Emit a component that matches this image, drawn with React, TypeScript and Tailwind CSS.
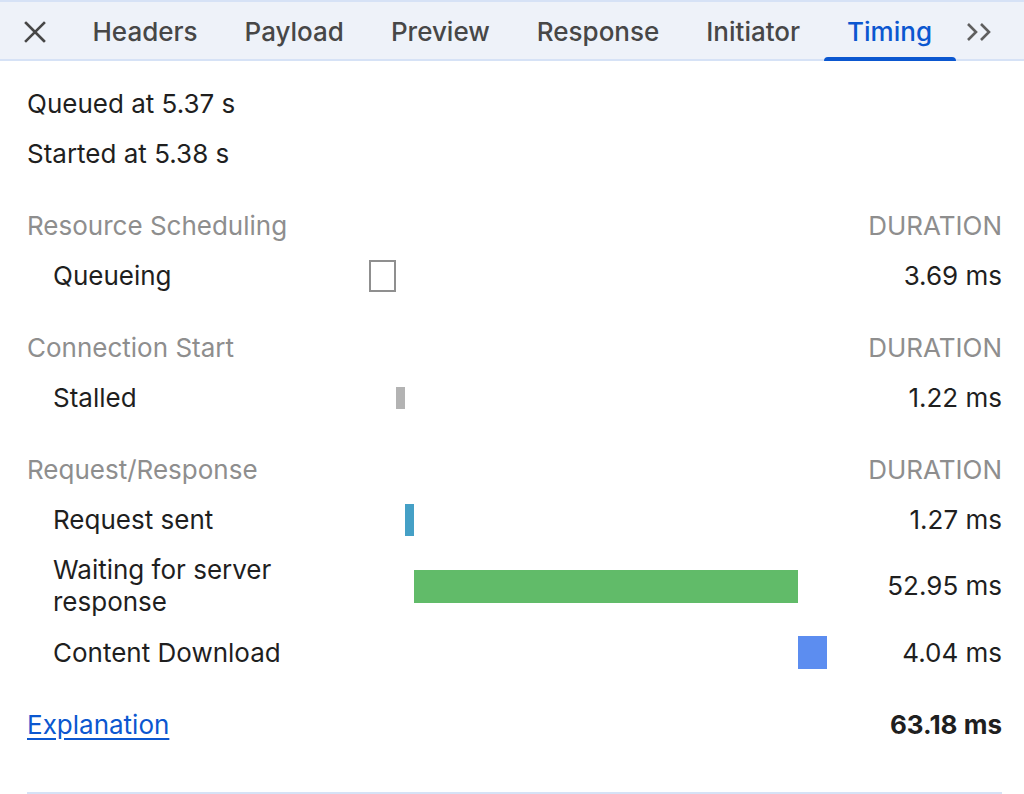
import React from "react";

interface Phase {
  label: string;
  start: number;
  duration: number;
  kind: "queue" | "stalled" | "sent" | "waiting" | "download";
}

interface Section {
  title: string;
  phases: Phase[];
}

const TOTAL = 63.18;
const TRACK_WIDTH = 458;

const sections: Section[] = [
  {
    title: "Resource Scheduling",
    phases: [{ label: "Queueing", start: 0, duration: 3.69, kind: "queue" }],
  },
  {
    title: "Connection Start",
    phases: [{ label: "Stalled", start: 3.69, duration: 1.22, kind: "stalled" }],
  },
  {
    title: "Request/Response",
    phases: [
      { label: "Request sent", start: 4.91, duration: 1.27, kind: "sent" },
      { label: "Waiting for server response", start: 6.18, duration: 52.95, kind: "waiting" },
      { label: "Content Download", start: 59.13, duration: 4.04, kind: "download" },
    ],
  },
];

const tabs = ["Headers", "Payload", "Preview", "Response", "Initiator", "Timing"];

const barClass: Record<Phase["kind"], string> = {
  queue: "h-[32px] border-2 border-[#8f8f8f] bg-white",
  stalled: "h-[22px] bg-[#b3b3b3]",
  sent: "h-[32px] bg-[#45a0c6]",
  waiting: "h-[33px] bg-[#61bb69]",
  download: "h-[33px] bg-[#5c8df0]",
};

const Bar = ({ phase }: { phase: Phase }) => {
  const px = TRACK_WIDTH / TOTAL;
  return (
    <div className="flex items-center h-full">
      <div
        className={barClass[phase.kind]}
        style={{
          marginLeft: Math.round(phase.start * px),
          width: Math.round(phase.duration * px),
        }}
      />
    </div>
  );
};

const TabBar = () => (
  <div className="flex items-stretch h-[61px] bg-[#eef2f9] border-t-2 border-b-2 border-[#d6e2f6] pl-[12px]">
    <button className="w-[57px] flex items-center justify-center pt-[3px] pr-[11px] text-[#474747]">
      <svg width="24" height="24" viewBox="0 0 24 24" fill="none" stroke="currentColor" strokeWidth={2.6} strokeLinecap="square">
        <path d="M3 3l18 18M21 3L3 21" />
      </svg>
    </button>
    {tabs.map((tab) => {
      const active = tab === "Timing";
      return (
        <div
          key={tab}
          className={`relative flex items-center px-[23.5px] pt-[3px] font-medium ${
            active ? "text-[#0b57d0]" : "text-[#474747]"
          }`}
        >
          {tab}
          {active && (
            <div className="absolute left-0 right-0 bottom-[-2px] h-[4px] bg-[#0b57d0] rounded-t-[4px]" />
          )}
        </div>
      );
    })}
    <div className="flex items-center pl-[10px] pt-[3px] text-[#5f5f5f]">
      <svg width="28" height="20" viewBox="0 0 28 20" fill="none" stroke="currentColor" strokeWidth={2.6}>
        <path d="M2 2l8 8-8 8M15 2l8 8-8 8" />
      </svg>
    </div>
  </div>
);

export default function App() {
  return (
    <div
      className="w-[1024px] h-[794px] bg-white text-[#1f1f1f] text-[26px] leading-[32px] overflow-hidden"
      style={{ fontFamily: "Inter, 'Noto Sans', sans-serif" }}
    >
      <TabBar />

      <div className="pl-[27px] pr-[22px] pt-[18px]">
        <div className="py-[9px]">Queued at 5.37 s</div>
        <div className="py-[9px]">Started at 5.38 s</div>

        {sections.map((section) => (
          <div key={section.title} className="mt-[22px]">
            <div className="grid grid-cols-[342px_458px_1fr] py-[9px] text-[#8e8e8e]">
              <div>{section.title}</div>
              <div />
              <div className="text-right">DURATION</div>
            </div>
            {section.phases.map((phase) => (
              <div key={phase.label} className="grid grid-cols-[342px_458px_1fr] items-center py-[9px]">
                <div className="pl-[26px] pr-[40px]">{phase.label}</div>
                <Bar phase={phase} />
                <div className="text-right">{phase.duration.toFixed(2)} ms</div>
              </div>
            ))}
          </div>
        ))}

        <div className="mt-[22px] flex justify-between py-[9px]">
          <a href="#" className="text-[#0b57d0] underline underline-offset-[4px]">
            Explanation
          </a>
          <span className="font-bold">{TOTAL.toFixed(2)} ms</span>
        </div>

        <div className="mt-[42px] h-[2px] bg-[#d6e2f6]" />
      </div>
    </div>
  );
}
